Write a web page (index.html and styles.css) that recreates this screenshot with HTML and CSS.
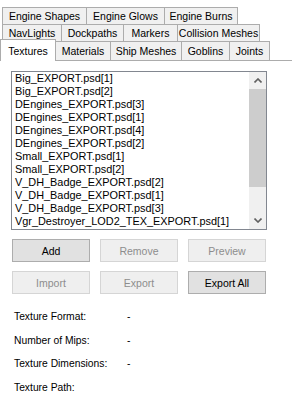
FILE: index.html
```html
<!DOCTYPE html>
<html>
<head>
<meta charset="utf-8">
<link rel="stylesheet" href="styles.css">
</head>
<body>
<div class="tabs">
  <div class="tab-row">
    <div class="tab w85">Engine Shapes</div>
    <div class="tab w79">Engine Glows</div>
    <div class="tab w74">Engine Burns</div>
  </div>
  <div class="tab-row">
    <div class="tab w60">NavLights</div>
    <div class="tab w63">Dockpaths</div>
    <div class="tab w55">Markers</div>
    <div class="tab w83">Collision Meshes</div>
  </div>
  <div class="tab-row tab-row-last">
    <div class="tab tab-active w56">Textures</div>
    <div class="tab w56">Materials</div>
    <div class="tab w72">Ship Meshes</div>
    <div class="tab w49">Goblins</div>
    <div class="tab w41">Joints</div>
  </div>
</div>
<div class="page">
  <div class="listbox">
    <ul class="items">
      <li>Big_EXPORT.psd[1]</li>
      <li>Big_EXPORT.psd[2]</li>
      <li>DEngines_EXPORT.psd[3]</li>
      <li>DEngines_EXPORT.psd[1]</li>
      <li>DEngines_EXPORT.psd[4]</li>
      <li>DEngines_EXPORT.psd[2]</li>
      <li>Small_EXPORT.psd[1]</li>
      <li>Small_EXPORT.psd[2]</li>
      <li>V_DH_Badge_EXPORT.psd[2]</li>
      <li>V_DH_Badge_EXPORT.psd[1]</li>
      <li>V_DH_Badge_EXPORT.psd[3]</li>
      <li>Vgr_Destroyer_LOD2_TEX_EXPORT.psd[1]</li>
    </ul>
    <div class="vscroll">
      <div class="sb-btn"><svg width="8" height="5" viewBox="0 0 8 5"><polyline points="0.5,4.5 4,1 7.5,4.5" fill="none" stroke="#606060" stroke-width="1.6"/></svg></div>
      <div class="sb-track"><div class="sb-thumb"></div></div>
      <div class="sb-btn"><svg width="8" height="5" viewBox="0 0 8 5"><polyline points="0.5,0.5 4,4 7.5,0.5" fill="none" stroke="#606060" stroke-width="1.6"/></svg></div>
    </div>
  </div>
  <div class="buttons">
    <button class="btn">Add</button>
    <button class="btn" disabled>Remove</button>
    <button class="btn" disabled>Preview</button>
    <button class="btn" disabled>Import</button>
    <button class="btn" disabled>Export</button>
    <button class="btn">Export All</button>
  </div>
  <div class="info">
    <span>Texture Format:</span><span>-</span>
    <span>Number of Mips:</span><span>-</span>
    <span>Texture Dimensions:</span><span>-</span>
    <span>Texture Path:</span><span></span>
  </div>
</div>
</body>
</html>
```

FILE: styles.css
```css
body {
  margin: 0;
  background: #ffffff;
  font-family: "Liberation Sans", Arial, sans-serif;
  font-size: 10.5px;
  color: #000000;
}

.tabs {
  padding-top: 7px;
}

.tab-row {
  display: flex;
  align-items: flex-start;
  padding-left: 2px;
  margin-top: -1px;
}

.tab-row:first-child {
  margin-top: 0;
}

.tab {
  box-sizing: border-box;
  height: 18px;
  border: 1px solid #acacac;
  background: #f0f0f0;
  margin-right: -1px;
  display: flex;
  align-items: center;
  justify-content: center;
  white-space: nowrap;
  padding-bottom: 1px;
}

.tab-row-last .tab {
  height: 19px;
  border-bottom: none;
}

.tab-row-last .tab.tab-active {
  position: relative;
  z-index: 1;
  height: 22px;
  margin-top: -2px;
  margin-bottom: -1px;
  margin-left: -2px;
  background: #ffffff;
  padding-bottom: 0;
}

.w41 { width: 41px; }
.w49 { width: 49px; }
.w55 { width: 55px; }
.w56 { width: 56px; }
.w60 { width: 60px; }
.w63 { width: 63px; }
.w72 { width: 72px; }
.w74 { width: 74px; }
.w79 { width: 79px; }
.w83 { width: 83px; }
.w85 { width: 85px; }

.page {
  border-top: 1px solid #acacac;
  padding-top: 10px;
}

.listbox {
  box-sizing: border-box;
  margin-left: 11px;
  width: 256px;
  height: 159px;
  border: 1px solid #828790;
  display: flex;
  background: #ffffff;
}

.items {
  flex: 1;
  margin: 0;
  padding: 0 0 0 3px;
  list-style: none;
  overflow: hidden;
  font-size: 10.9px;
}

.items li {
  height: 13px;
  line-height: 13px;
  white-space: nowrap;
}

.vscroll {
  width: 17px;
  display: flex;
  flex-direction: column;
  background: #f0f0f0;
}

.sb-btn {
  height: 17px;
  display: flex;
  align-items: center;
  justify-content: center;
}

.sb-track {
  flex: 1;
}

.sb-thumb {
  height: 98px;
  background: #cdcdcd;
}

.buttons {
  display: grid;
  grid-template-columns: repeat(3, 78px);
  column-gap: 10px;
  row-gap: 9px;
  margin: 9px 0 0 12px;
}

.btn {
  box-sizing: border-box;
  height: 23px;
  border: 1px solid #adadad;
  background: #e1e1e1;
  font: inherit;
  color: #000000;
  padding: 0;
}

.btn:disabled {
  border-color: #d5d5d5;
  background: #efefef;
  color: #8d8d8d;
}

.info {
  display: grid;
  grid-template-columns: 113px auto;
  row-gap: 10.67px;
  margin: 16px 0 0 14px;
  line-height: 13px;
  font-size: 10.3px;
}
```
